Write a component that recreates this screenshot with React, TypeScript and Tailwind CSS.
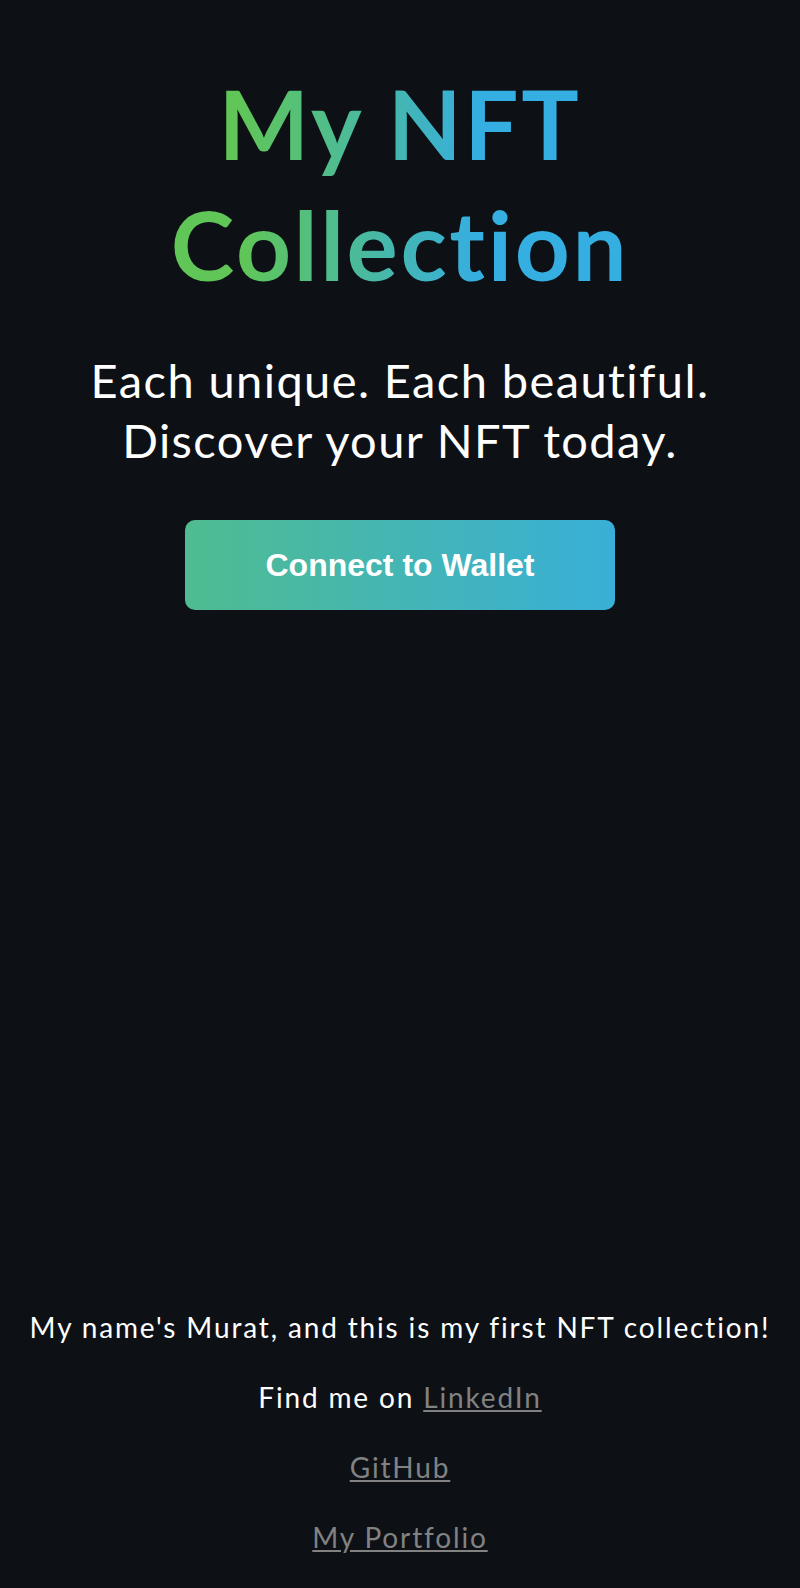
import React from "react";

export default function App() {
  return (
    <div
      className="min-h-screen w-full bg-[#0d1116] text-center text-white flex flex-col [font-variant-ligatures:none]"
      style={{ fontFamily: "Lato, 'Open Sans', sans-serif" }}
    >
      <div className="pt-[62px] flex flex-col items-center">
        <h1 className="m-0 w-full text-[96px] leading-[121px] tracking-[2.6px] font-bold bg-[linear-gradient(to_right,#60c657_30%,#35aee2_60%)] bg-clip-text text-transparent">
          My NFT
          <br />
          Collection
        </h1>
        <p className="mt-[46px] text-[47px] leading-[60px] tracking-[1.4px] text-white">
          Each unique. Each beautiful.
          <br />
          Discover your NFT today.
        </p>
        <button
          className="mt-[50px] h-[90px] px-[80px] rounded-[10px] text-[32px] font-bold text-white bg-[linear-gradient(to_right,#4fbc90,#39afd8)]"
          style={{ fontFamily: "'Liberation Sans', Arial, sans-serif" }}
        >
          Connect to Wallet
        </button>
      </div>
      <div className="mt-auto pb-[16px] flex flex-col items-center text-[28px] leading-[70px] tracking-[1.85px]">
        <p>My name's Murat, and this is my first NFT collection!</p>
        <p>
          Find me on{" "}
          <a href="#" className="text-[#828282] underline">
            LinkedIn
          </a>
        </p>
        <p>
          <a href="#" className="text-[#828282] underline">
            GitHub
          </a>
        </p>
        <p>
          <a href="#" className="text-[#828282] underline">
            My Portfolio
          </a>
        </p>
      </div>
    </div>
  );
}
